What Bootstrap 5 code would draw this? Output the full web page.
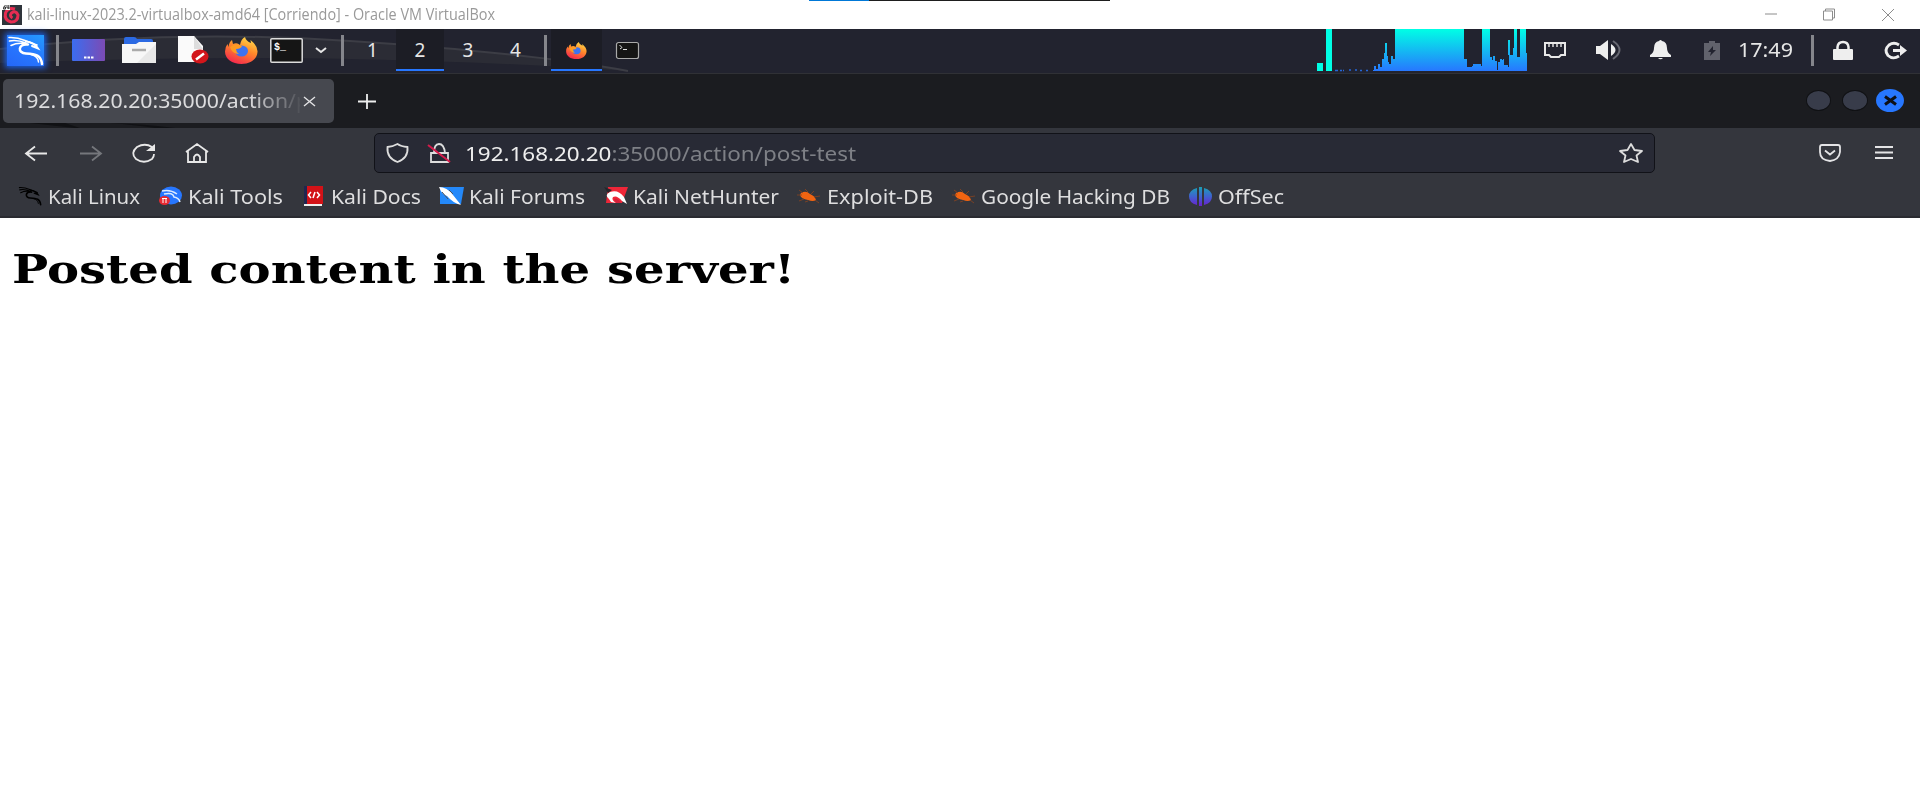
<!DOCTYPE html>
<html lang="en">
<head>
<meta charset="utf-8">
<title>kali-linux-2023.2-virtualbox-amd64</title>
<link href="https://cdn.jsdelivr.net/npm/bootstrap@5.3.0/dist/css/bootstrap.min.css" rel="stylesheet">
<style>
body{background:#fff;overflow:hidden;font-family:"Noto Sans",sans-serif;font-size:19px;line-height:26px}
svg{flex:none;display:block;overflow:visible}
.fit{display:block;flex:none;white-space:nowrap}
.fit>span{display:inline-block;transform-origin:0 50%}
.vm-title{height:29px;padding:0 26px 0 2px;font-family:"Open Sans",sans-serif;font-size:15.5px;line-height:20px;color:#999}
.vm-title .fit{margin:0 0 2px 5px}
.vm-strip{left:809px;top:0;width:301px;height:1px;background:linear-gradient(90deg,#0078d7 60px,#1e1e1e 60px)}
.panel{height:44px;background:#22232f;color:#e6e6e6}
.panel-left{grid-template-columns:51px 12px 51px 50px 57px 41px 49px 20px 22px 43px 48px 48px 47px 12px 51px 50px}
.panel-right{grid-template-columns:210px 56px 52px 51px 51px 56px 38px 24px 65px}
.slot{display:flex;height:42px;align-items:center;justify-content:center}
.panel-left .slot,.panel-right .slot{position:relative}
.slot.on{background:#1c1d25;border-bottom:2px solid #2777ff;padding-top:2px;height:42px}
.divider{width:3px;height:31px;background:#85868c}
.swoosh{left:0;top:0}
.logo{width:37px;height:31px;background:linear-gradient(30deg,#2567f8,#2777ff 50%,#249cff);box-shadow:0 0 6px 2px #1b62e8}
.tabs{height:55px;padding:5px 0 0 3px;background:#1b1c20;border-top:1px solid #303136}
.tab-cell{width:331px;height:44px;border-radius:5px;background:#46484f;color:#dcdcde;padding-left:11px}
.tab-text{width:286px;overflow:hidden;-webkit-mask-image:linear-gradient(90deg,#000 235px,transparent 289px);mask-image:linear-gradient(90deg,#000 235px,transparent 289px)}
.wbtn{width:25px;height:21px;border-radius:50%;background:#383c4a;border:1px solid #101114}
.wbtn.close-btn{width:28px;height:23px;background:#2777ff;border:0}
.toolbars{height:90px;background:#34363d;border-bottom:2px solid #2a2b31;color:#dededf;padding-top:5px}
.nav-row{height:40px;padding-left:25px}
.url{width:1281px;height:40px;border:1px solid #111218;border-radius:5px;background:#282a35;padding:0 11px 0 11px}
.url .fit{margin:2px 0 0 14px}
.url .host{color:#eee}.url .rest{color:#7e8086}
.marks{height:43px;padding:3px 0 0 18px}
.marks .fit{position:relative;left:-1px;top:1px}
.page-h{font:bold 39px/48px "DejaVu Serif",serif;color:#000;margin:27px 0 0 12px}
</style>
</head>
<body>
<svg width="0" height="0" class="position-absolute"><defs>
<linearGradient id="load" x1="0" y1="0" x2="0" y2="1"><stop offset="0" stop-color="#00ffe5"/><stop offset="1" stop-color="#2777ff"/></linearGradient>
<linearGradient id="desk"><stop offset="0" stop-color="#3b6df0"/><stop offset="1" stop-color="#7c4bb4"/></linearGradient>
<linearGradient id="flame" x1=".8" y1="0" x2=".3" y2="1"><stop offset="0" stop-color="#ffe14d"/><stop offset=".45" stop-color="#ff8a2a"/><stop offset="1" stop-color="#f5264e"/></linearGradient>
<linearGradient id="off" x1="0" y1="0" x2="0" y2="1"><stop offset="0" stop-color="#1ba0b5"/><stop offset=".5" stop-color="#3f62cf"/><stop offset="1" stop-color="#6a20d0"/></linearGradient>
<symbol id="dragon" viewBox="0 0 37 31"><g fill="none" stroke="currentColor" stroke-linecap="round">
<path d="M2 2.5Q10 2 18 5.500T30 10M2.500 6Q10 4.500 19 8M4 10.500Q11 7 20 9" stroke-width="1.600"/><path d="M19 6.500Q27 7 31 13.500L25 11" stroke-width="2"/>
<path d="M21 9.500C11 8.500 10 18 19 18.500C29 19 34 20 35 29" stroke-width="2.500"/><path d="M24 19.500Q31 21 31.500 27" stroke-width="1.500"/></g></symbol>
<symbol id="fox" viewBox="0 0 33 27"><path d="M16.500 27C7 27 0 22 0 14.500Q0 10 2.500 7L3.500 10Q4 5 7 3L8 7Q12 5 15 8Q16 2 20 0Q21 4 26 6L25.500 3Q33 9 32.500 15C32 22 26 27 16.500 27Z" fill="url(#flame)"/><ellipse cx="16.500" cy="14" rx="6.500" ry="5.500" fill="#3d73f0"/><path d="M5 10Q10 6 17 9Q16 12 11 12Q11 15 14 17Q7 17 5 10Z" fill="#ff9b22"/></symbol>
<symbol id="bug" viewBox="0 0 23 17"><path d="M4 5Q9 2 13 6Q18 8 19 12Q16 14 11 12Q4 11 3 7Z" fill="#f26411"/><path d="M6 5L2 2M5 7H0M7 11L2 13M11 4L8 1M14 6L17 3M17 9L23 8M18 12L22 15M11 13L8 14" stroke="#8a4420" stroke-width=".8" fill="none"/></symbol>
</defs></svg>

<header class="vm-title d-flex align-items-center position-relative">
 <svg width="20" height="20" viewBox="0 0 20 20"><path fill="#2f343b" d="M0 0H20V20H0z"/><path d="M10.500 13Q7 11 9.500 8Q14 5 16 10Q16 17 9 17Q2 15 3.500 8Q6 2 13 4" fill="none" stroke="#e62c52" stroke-width="3"/><path fill="#fff" d="M0-1H8V5H0z"/><path d="M3.500 0Q1 2 1.500 4H3.500V2H2M5 0V3H7.500M6.800 0V4" stroke="#333" fill="none"/></svg>
 <div class="fit" data-w="468"><span>kali-linux-2023.2-virtualbox-amd64 [Corriendo] - Oracle VM VirtualBox</span></div>
 <svg class="ms-auto" width="131" height="14" viewBox="0 0 131 14" fill="none" stroke="#8c8c8c"><path d="M2 6H14M60.500 3H69.500V12H60.500zM62.500 3V1H71.500V10H70M119 1L131 13M131 1L119 13"/></svg>
 <div class="vm-strip position-absolute"></div>
</header>

<nav class="panel d-flex justify-content-between position-relative">
 <svg class="swoosh position-absolute" width="640" height="43"><path d="M0 20Q170 0 350 12T628 42Q500 33 350 30T0 34Z" fill="#2b2c35"/><path d="M0 20Q170 0 350 12T628 42" fill="none" stroke="#3c3d45" stroke-width="2"/></svg>
 <div class="panel-left d-grid">
  <div class="slot"><div class="logo text-white"><svg width="37" height="31"><use href="#dragon"/></svg></div></div>
  <div class="slot"><div class="divider"></div></div>
  <div class="slot"><svg width="33" height="22"><rect width="33" height="22" rx="1" fill="url(#desk)"/><path d="M12 18.500H22" stroke="#fff" stroke-width="2" stroke-dasharray="2.500 1"/></svg></div>
  <div class="slot"><svg width="34" height="26"><path d="M2 8V2Q2 0 4 0H12Q14 0 15 2H29Q31 2 31 4V9z" fill="#2c6ae3"/><path d="M0 7H14L17 5H34V26H0z" fill="#f7f7f7"/><path d="M34 7V26H15z" fill="#e8e8e8"/><path d="M10 13H24" stroke="#aaa" stroke-width="2.500"/></svg></div>
  <div class="slot"><svg width="32" height="28"><path d="M1 0H17L26 10V26H1z" fill="#fafafa"/><path d="M17 0L26 13H17z" fill="#ddd"/><ellipse cx="23" cy="20.500" rx="8.500" ry="7" fill="#d3161b"/><path d="M19 23.500L27 17.500" stroke="#fff" stroke-width="2.500"/></svg></div>
  <div class="slot"><svg width="33" height="27"><use href="#fox"/></svg></div>
  <div class="slot"><svg width="33" height="25"><rect x=".8" y=".8" width="31.400" height="23.400" rx="1" fill="#151515" stroke="#ddd" stroke-width="1.500"/><text x="4" y="11.500" font-family="Liberation Mono,monospace" font-weight="bold" font-size="10" fill="#fff">$_</text></svg></div>
  <div class="slot"><svg width="12" height="6"><path d="M1 1L6 5L11 1" fill="none" stroke="#e6e6e6" stroke-width="2"/></svg></div>
  <div class="slot"><div class="divider"></div></div>
  <div class="slot pe-1">1</div><div class="slot on">2</div><div class="slot">3</div><div class="slot">4</div>
  <div class="slot"><div class="divider"></div></div>
  <div class="slot on"><svg width="21" height="17"><use href="#fox"/></svg></div>
  <div class="slot"><svg width="23" height="17"><rect x=".5" y=".5" width="22" height="16" rx="2" fill="#151515" stroke="#aaa" stroke-width="1.200"/><path d="M3.500 3L6 5.500L4 7M7 7.500H11" stroke="#ddd" fill="none"/></svg></div>
 </div>
 <div class="panel-right d-grid">
  <svg width="210" height="42"><path fill="#00ffe5" d="M0 34H6V42H0zM9 0H15V42H9z"/><path d="M18 41.500H21M23 41.500H25M26 41.500H27M32 41H34M38 41H40M43 41.500H45M49 41.500H51" stroke="#2667d8" stroke-width="1.500"/><path fill="url(#load)" d="M56 42V41H57V37H59V40H61V35H63V38H65V30H67V24H68V14H70V27H71V33H72V35H74V27H76V30H78V0H147V30H150V38H155V37H156V35H164V37H165V0H173V28H175V31H176V27H178V32H180V41H181V33H183V30H185V31H186V30H187V36H191V38H192V26H191V11H193V26H196V19H197V0H200V28H203V0H209V24H210V42Z"/></svg>
  <div class="slot"><svg width="22" height="16" fill="none" stroke="#e8e8e8" stroke-width="2"><path d="M1 1H21V13H17L15 15H7L5 13H1z"/><path d="M5 2V5M9 2V5M13 2V5M17 2V5" stroke-width="1.400"/></svg></div>
  <div class="slot"><svg width="26" height="20"><path d="M0 6H4L12 0V20L4 14H0zM15 4Q24 10 15 16z" fill="#eee"/><path d="M17 1Q30 10 17 19" stroke="#666771" stroke-width="2" fill="none"/></svg></div>
  <div class="slot"><svg width="21" height="20" fill="#eee"><path d="M0 17V15Q4 13 4 8Q4 2 9 1Q10.500-1 12 1Q17 2 17 8Q17 13 21 15V17zM8 18H13Q10.500 20.500 8 18z"/></svg></div>
  <div class="slot"><svg width="16" height="19"><path d="M0 2H5V0H11V2H16V19H0z" fill="#61626c"/><path d="M9 5L4 11H7L6 15L12 9H9z" fill="#22232f"/></svg></div>
  <div class="slot justify-content-end"><div class="fit" data-w="55"><span>17:49</span></div></div>
  <div class="slot"><div class="divider"></div></div>
  <div class="slot"><svg width="20" height="19"><rect y="8" width="20" height="11" rx="1" fill="#eee"/><path d="M4.500 9V6Q5 1 10 1T15.500 6V9" fill="none" stroke="#eee" stroke-width="2.500"/></svg></div>
  <div class="slot ps-3"><svg width="23" height="17"><path d="M15 3Q10-.5 5 3Q-.5 8 4 13.500Q9 18 15 14" stroke="#eee" stroke-width="2.800" fill="none"/><path d="M9 7H16V3L23 8.500L16 14V10H9z" fill="#eee"/></svg></div>
 </div>
</nav>

<div class="tabs d-flex position-relative pe-3">
 <svg class="position-absolute" style="left:30px;top:48px" width="200" height="7"><path d="M0 1L45 6H50L35 1zM80 1Q115 2 145 6H125Q105 3 80 1z" fill="#101114"/></svg>
 <div class="tab-cell d-flex align-items-center">
  <div class="tab-text"><div class="fit" data-w="370"><span>192.168.20.20:35000/action/post-test</span></div></div>
  <svg style="margin-left:3px" width="13" height="11" viewBox="0 0 13 11"><path d="M1 1L12 10M12 1L1 10" stroke="#e3e3e5" stroke-width="1.400"/></svg>
 </div>
 <svg class="ms-4 mt-3" width="18" height="16" viewBox="0 0 18 16" stroke="#eee" stroke-width="1.800"><path d="M0 6.500H18M9-1V14"/></svg>
 <div class="d-flex ms-auto gap-2 align-items-center" style="height:42px">
  <div class="wbtn" style="margin-right:3px"></div><div class="wbtn me-1" style="width:26px"></div>
  <div class="wbtn close-btn d-flex align-items-center justify-content-center" style="margin-left:-4px"><svg width="11" height="9"><path d="M0 .5L11 8.500M11 .5L0 8.500" stroke="#0e1016" stroke-width="3"/></svg></div>
 </div>
</div>

<div class="toolbars">
 <div class="nav-row d-flex align-items-center">
  <svg width="349" height="20" fill="none" stroke="#e8e8e8" stroke-width="1.800"><path d="M1 10.500H22M10 3.500L1 10.500L10 17.500"/><path d="M55 10.500H76M67 3.500L76 10.500L67 17.500" stroke="#75777c"/><path d="M127 4Q120-.5 112 4Q105 10 111 16Q119 21.500 127 16Q129 14 129 11"/><path d="M130 1V8H121z" fill="#e8e8e8" stroke="none"/><path d="M161 9L172 1L183 9M163 8V19H181V8M169 19V14Q172 9 175 14V19"/></svg>
  <div class="url d-flex align-items-center">
   <svg width="65" height="20" fill="none" stroke="#ddd" stroke-width="1.800"><path d="M11.500 1Q15 3.500 21.500 4Q22.500 15 11.500 19Q.5 15 1.500 4Q7 3.500 11.500 1zM48 10Q48 1 53 1T59 10M45 10H62V19H45z"/><path d="M42 2L64 19" stroke="#d51b4b" stroke-width="2"/></svg>
   <div class="fit" data-w="391"><span><span class="host">192.168.20.20</span><span class="rest">:35000/action/post-test</span></span></div>
   <svg class="ms-auto" width="24" height="20" viewBox="0 0 24 20" fill="none" stroke="#ddd" stroke-width="1.800" stroke-linejoin="round"><path d="M12 1L15.500 7L23 8L17.500 12.500L19 19L12 16L5 19L6.500 12.500L1 8L8.500 7z"/></svg>
  </div>
  <svg style="margin-left:164px" width="76" height="18" fill="none" stroke="#e4e4e6" stroke-width="1.800"><path d="M3 1H19Q21 1 21 3V8Q20 16 11 17Q1 16 1 8V3Q1 1 3 1zM6 6.500L11 10.500L16 6.500M56 3H74M56 8.500H74M56 14H74"/></svg>
 </div>
 <div class="marks d-flex align-items-center" id="marks">
  <svg class="text-black" width="24" height="20"><use href="#dragon"/></svg><div class="fit" style="margin-left:7px" data-w="92"><span>Kali Linux</span></div>
  <svg style="margin-left:18px" width="23" height="20"><ellipse cx="12" cy="9.500" rx="11" ry="9" fill="#2777ff"/><path d="M3 5Q11 3 18 8M5 8Q14 6 15 11Q20 12 21 16" stroke="#dcebff" stroke-width="1.500" fill="none"/><ellipse cx="5.500" cy="14.500" rx="5.500" ry="4.500" fill="#e72931"/><path d="M3 12.500H8M4 12V17M7 12V17" stroke="#fff"/></svg><div class="fit" style="margin-left:7px" data-w="95"><span>Kali Tools</span></div>
  <svg style="margin-left:20px" width="19" height="20"><path fill="#d31217" d="M0 0H19V18H0z"/><path fill="#202650" d="M0 0H3V18H0z"/><path fill="#eee" d="M0 18H18V20H0z"/><path d="M7 6L4.500 9L7 12M13 6L15.500 9L13 12M11 6L9 12" stroke="#fff" stroke-width="1.500" fill="none"/></svg><div class="fit" style="margin-left:9px" data-w="90"><span>Kali Docs</span></div>
  <svg style="margin-left:17px" width="25" height="20"><path fill="#2489fa" d="M1 1H25L22 18H1z"/><path d="M0 1Q8 1 14 9L22 19Q14 17 8 10Q3 9 0 1z" fill="#fff"/><path d="M3 6L9 13M10 4L14 8" stroke="#4b5360"/></svg><div class="fit" style="margin-left:6px" data-w="116"><span>Kali Forums</span></div>
  <svg style="margin-left:18px" width="24" height="20"><path fill="#ef2638" d="M4 1H24L18 17L2 17z"/><path d="M5 13Q0 9 6 6Q14 3 20 11L23 18L18 15Q13 9 9 11Q7 14 12 17L7 16z" fill="#fff"/><path d="M10 13Q13 11 17 17H12z" fill="#d3203a"/><path d="M0 1L8 4L4 7" fill="#25262b"/></svg><div class="fit" style="margin-left:6px" data-w="146"><span>Kali NetHunter</span></div>
  <svg style="margin-left:17px" width="23" height="17"><use href="#bug"/></svg><div class="fit" style="margin-left:8px" data-w="106"><span>Exploit-DB</span></div>
  <svg style="margin-left:18px" width="23" height="17"><use href="#bug"/></svg><div class="fit" style="margin-left:7px" data-w="189"><span>Google Hacking DB</span></div>
  <svg style="margin-left:18px" width="23" height="19"><path fill="url(#off)" d="M8 1V18Q0 16 0 9.500T8 1zM15 1V18Q23 16 23 9.500T15 1zM10 0H13V19H10z"/></svg><div class="fit" style="margin-left:7px" data-w="66"><span>OffSec</span></div>
 </div>
</div>

<main><h1 class="page-h fit" data-w="783"><span>Posted content in the server!</span></h1></main>
<script src="https://cdn.jsdelivr.net/npm/bootstrap@5.3.0/dist/js/bootstrap.bundle.min.js"></script>
<script>
document.querySelectorAll('.fit').forEach(function (el) {
  var s = el.firstElementChild, w = +el.dataset.w;
  var natural = s.getBoundingClientRect().width;
  el.style.width = w + 'px';
  s.style.transform = 'scaleX(' + w / natural + ')';
});
</script>
</body>
</html>
